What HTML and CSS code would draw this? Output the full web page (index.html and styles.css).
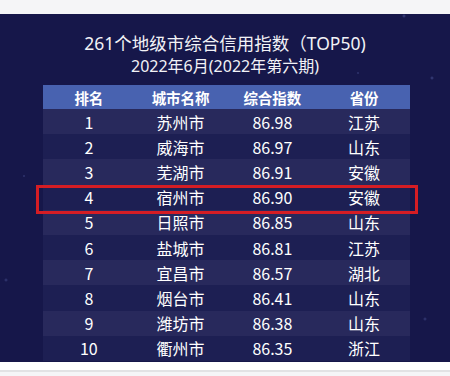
FILE: index.html
```html
<!DOCTYPE html>
<html lang="zh-CN">

<head>
    <meta charset="UTF-8">
    <meta name="viewport" content="width=device-width, initial-scale=1.0">
    <title>地级市综合信用指数</title>
    <link rel="stylesheet" href="styles.css">
</head>

<body>

    <div class="franja"></div>

    <div class="cartel">
        <h1>261个地级市综合信用指数（TOP50)</h1>
        <h2>2022年6月(2022年第六期)</h2>

        <div class="tabla">
            <div class="fila cabecera">
                <span>排名</span><span>城市名称</span><span>综合指数</span><span>省份</span>
            </div>
            <div class="fila"><span>1</span><span>苏州市</span><span>86.98</span><span>江苏</span></div>
            <div class="fila"><span>2</span><span>威海市</span><span>86.97</span><span>山东</span></div>
            <div class="fila"><span>3</span><span>芜湖市</span><span>86.91</span><span>安徽</span></div>
            <div class="fila marcada"><span>4</span><span>宿州市</span><span>86.90</span><span>安徽</span></div>
            <div class="fila"><span>5</span><span>日照市</span><span>86.85</span><span>山东</span></div>
            <div class="fila"><span>6</span><span>盐城市</span><span>86.81</span><span>江苏</span></div>
            <div class="fila"><span>7</span><span>宜昌市</span><span>86.57</span><span>湖北</span></div>
            <div class="fila"><span>8</span><span>烟台市</span><span>86.41</span><span>山东</span></div>
            <div class="fila"><span>9</span><span>潍坊市</span><span>86.38</span><span>山东</span></div>
            <div class="fila"><span>10</span><span>衢州市</span><span>86.35</span><span>浙江</span></div>
        </div>
    </div>

    <div class="pie"></div>

</body>

</html>
```

FILE: styles.css
```css
body {
    font-family: "Noto Sans", "Noto Sans CJK SC", sans-serif;
    margin: 0;
    padding: 0;
    background-color: #f5f5f7;
    overflow: hidden;
}

.franja {
    height: 14px;
    background-color: #f5f5f7;
}

.cartel {
    height: 348px;
    box-sizing: border-box;
    padding-top: 18px;
    background-color: #16174a;
    background-image:
        radial-gradient(circle at 404px 2px, rgba(90, 100, 170, 0.6) 0, transparent 2px),
        radial-gradient(circle at 432px 64px, rgba(90, 100, 170, 0.6) 0, transparent 2px),
        radial-gradient(circle at 358px 59px, rgba(90, 100, 170, 0.5) 0, transparent 1.5px),
        radial-gradient(circle at 24px 162px, rgba(90, 100, 170, 0.5) 0, transparent 1.5px),
        radial-gradient(circle at 6px 266px, rgba(90, 100, 170, 0.5) 0, transparent 2px),
        radial-gradient(circle at 425px 305px, rgba(90, 100, 170, 0.5) 0, transparent 2px);
    color: #fff;
    text-align: center;
}

h1 {
    margin: 0;
    font-size: 17.5px;
    font-weight: normal;
    line-height: 22px;
    color: #f2f2f6;
}

h2 {
    margin: 1px 0 0;
    font-size: 16px;
    font-weight: normal;
    line-height: 22px;
    color: #f2f2f6;
}

.tabla {
    width: 367px;
    margin: 8px 0 0 43px;
}

.fila {
    display: grid;
    grid-template-columns: repeat(4, 1fr);
    align-items: center;
    height: 25.2px;
    font-family: "Noto Sans CJK SC", sans-serif;
    font-size: 16px;
    background-color: #1d1f53;
}

.fila:nth-child(even) {
    background-color: #28295c;
}

.cabecera {
    height: 24px;
    font-size: 14.5px;
    font-weight: bold;
    background-color: #4862b0;
}

.marcada {
    position: relative;
}

.marcada::after {
    content: "";
    position: absolute;
    top: 0;
    left: -7px;
    right: -8px;
    bottom: -4px;
    border: 3px solid #d51d24;
}

.pie {
    height: 10px;
    box-sizing: border-box;
    background-color: #ffffff;
    border-bottom: 2px solid #e2e2e4;
}
```
